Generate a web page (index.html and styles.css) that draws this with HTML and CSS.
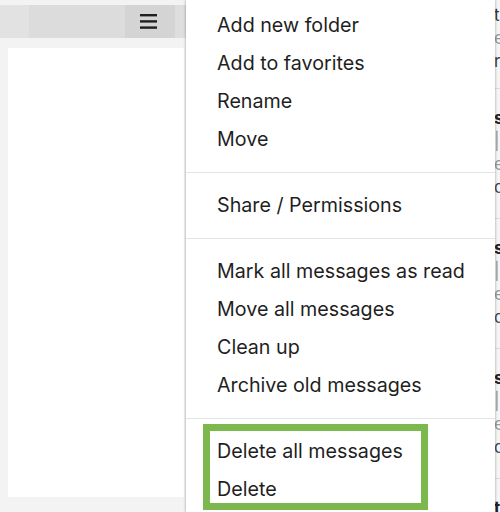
FILE: index.html
```html
<!DOCTYPE html>
<html lang="en">
<head>
<meta charset="utf-8">
<link rel="stylesheet" href="styles.css">
</head>
<body>
<div class="app">
  <div class="folders">
    <div class="toolbar">
      <div class="tb-fill"></div>
      <button class="tb-menu" aria-label="Menu">
        <svg width="17" height="15" viewBox="0 0 17 15"><rect x="0" y="0" width="17" height="2.4" fill="#1f1f1f"/><rect x="0" y="6.2" width="17" height="2.4" fill="#1f1f1f"/><rect x="0" y="12.4" width="17" height="2.4" fill="#1f1f1f"/></svg>
      </button>
      <div class="tb-end"></div>
    </div>
    <div class="folder-panel"></div>
  </div>
  <div class="menu">
    <ul class="group first">
      <li>Add new folder</li>
      <li>Add to favorites</li>
      <li>Rename</li>
      <li>Move</li>
    </ul>
    <ul class="group">
      <li>Share / Permissions</li>
    </ul>
    <ul class="group">
      <li>Mark all messages as read</li>
      <li>Move all messages</li>
      <li>Clean up</li>
      <li>Archive old messages</li>
    </ul>
    <ul class="group last">
      <li class="hl-wrap">
        <div class="highlight">
          <div class="hl-item">Delete all messages</div>
          <div class="hl-item">Delete</div>
        </div>
      </li>
    </ul>
  </div>
  <div class="list">
    <div class="row first"><div class="l1">t</div><div class="l2">e</div><div class="l3">r</div></div>
    <div class="row"><div class="s">s</div><div class="b">|</div><div class="l2">e</div><div class="l3">d</div></div>
    <div class="row"><div class="s">s</div><div class="b">|</div><div class="l2">e</div><div class="l3">d</div></div>
    <div class="row"><div class="s">s</div><div class="b">|</div><div class="l2">e</div><div class="l3">d</div></div>
    <div class="row"><div class="s">t</div></div>
  </div>
</div>
</body>
</html>
```
FILE: styles.css
```css
* { box-sizing: border-box; }
html, body { margin: 0; padding: 0; }
body {
  width: 500px;
  height: 512px;
  overflow: hidden;
  background: #f3f3f3;
  font-family: Inter, "Liberation Sans", sans-serif;
  color: #1f1f1f;
}
.app {
  display: flex;
  height: 512px;
}
.folders {
  width: 186px;
  flex: none;
  background: #f3f3f3;
  padding-top: 5px;
  display: flex;
  flex-direction: column;
}
.toolbar {
  height: 33px;
  display: flex;
  background: #dcdcdc;
}
.tb-fill {
  flex: 1;
  background: linear-gradient(to right, #e2e2e2 0 29px, #dcdcdc 29px);
}
.tb-menu {
  width: 50px;
  border: 0;
  padding: 0 3px 0 0;
  margin: 0;
  background: #d4d4d4;
  display: flex;
  align-items: center;
  justify-content: center;
}
.tb-menu svg { display: block; }
.tb-end {
  width: 11px;
  background: #dedede;
}
.folder-panel {
  margin: 10px 2px 15px 8px;
  flex: 1;
  background: #ffffff;
}
.menu {
  width: 309px;
  flex: none;
  background: #ffffff;
  box-shadow: -1px 0 2px rgba(0,0,0,0.18), 1px 0 2px rgba(0,0,0,0.18);
  position: relative;
  z-index: 2;
}
.group {
  list-style: none;
  margin: 0;
  padding: 13px 0 14px 0;
  border-bottom: 1px solid #e4e4e4;
}
.group.first { padding-top: 6px; }
.group.last { border-bottom: 0; padding: 5px 0 0 0; }
.group li {
  height: 38px;
  line-height: 38px;
  padding-left: 31px;
  font-size: 19.7px;
  white-space: nowrap;
}
.group li.hl-wrap {
  height: auto;
  line-height: normal;
  padding-left: 17px;
}
.highlight {
  width: 225px;
  height: 86px;
  border: 7px solid #7db84e;
  padding: 1px 0 0 7px;
}
.hl-item {
  height: 38px;
  line-height: 38px;
  font-size: 19.7px;
  white-space: nowrap;
}
.list {
  flex: 1;
  background: #f5f5f5;
  overflow: hidden;
  font-size: 17px;
  color: #555;
}
.row {
  height: 130px;
  border-bottom: 1px solid #dddddd;
  padding-top: 18px;
  margin-left: -1px;
}
.row.first { height: 89px; padding-top: 4px; }
.row div { height: 23px; line-height: 23px; }
.s { font-weight: 700; color: #222; }
.b { color: #999; }
.l1 { color: #333; }
.l2 { color: #999; }
.l3 { color: #444; }
```
